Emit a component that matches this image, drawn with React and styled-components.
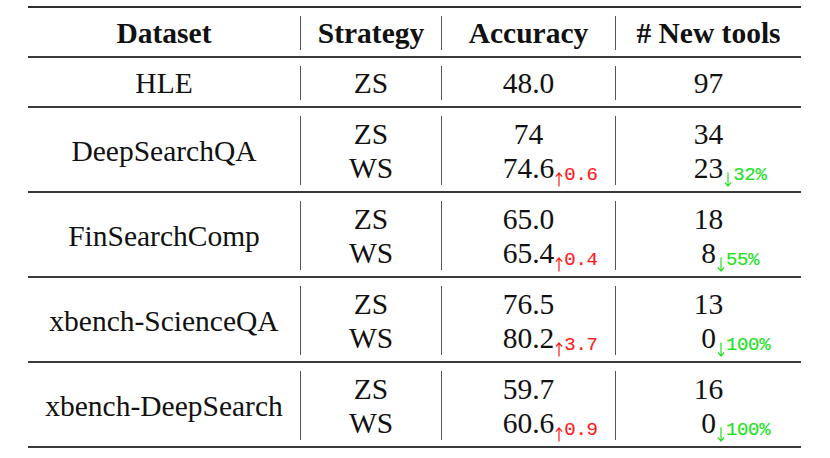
import React from "react";
import styled, { createGlobalStyle } from "styled-components";

const Global = createGlobalStyle`
  html, body {
    margin: 0;
    padding: 0;
    background: #fff;
  }
`;

const Page = styled.div`
  padding: 6px 0 0 28px;
  font-family: "Liberation Serif", "Times New Roman", serif;
  color: #111;
`;

const Table = styled.div`
  width: 773px;
  border-top: 2px solid #2e2e2e;
`;

const Row = styled.div`
  display: grid;
  grid-template-columns: 272px 141px 174px 186px;
  height: ${(p) => p.$h}px;
  border-bottom: 2px solid #3a3a3a;
`;

const Cell = styled.div`
  display: flex;
  flex-direction: column;
  justify-content: center;
  align-items: center;
  margin: 8px 0 6px;
  border-left: ${(p) => (p.$sep ? "1px solid #555" : "none")};
  font-size: 29.5px;
  line-height: 34px;
  font-weight: ${(p) => (p.$head ? 700 : 400)};
`;

const Value = styled.span`
  position: relative;
  display: block;
`;

const Delta = styled.span`
  position: absolute;
  left: 100%;
  top: 15px;
  display: flex;
  align-items: baseline;
  font-family: "Liberation Mono", "DejaVu Sans Mono", monospace;
  font-size: 19px;
  line-height: 19px;
  letter-spacing: -0.3px;
  -webkit-text-stroke: 0.15px currentColor;
  white-space: nowrap;
  color: ${(p) => (p.$up ? "#ff1a1a" : "#22e022")};
`;

const ArrowSvg = styled.svg`
  width: 8px;
  height: 15px;
  margin: 0 1px;
  align-self: flex-end;
  position: relative;
  top: 2px;
  flex-shrink: 0;
`;

const Arrow = ({ down }) => (
  <ArrowSvg viewBox="0 0 8 15" fill="none" stroke="currentColor" strokeWidth="1.2">
    {down ? (
      <path d="M4 0.5V14M0.8 10.4L4 14L7.2 10.4" />
    ) : (
      <path d="M4 14.5V1M0.8 4.6L4 1L7.2 4.6" />
    )}
  </ArrowSvg>
);

const rows = [
  { name: "HLE", lines: [{ s: "ZS", acc: "48.0", tools: "97" }] },
  {
    name: "DeepSearchQA",
    lines: [
      { s: "ZS", acc: "74", tools: "34" },
      { s: "WS", acc: "74.6", accD: "0.6", tools: "23", toolsD: "32%" },
    ],
  },
  {
    name: "FinSearchComp",
    lines: [
      { s: "ZS", acc: "65.0", tools: "18" },
      { s: "WS", acc: "65.4", accD: "0.4", tools: "8", toolsD: "55%" },
    ],
  },
  {
    name: "xbench-ScienceQA",
    lines: [
      { s: "ZS", acc: "76.5", tools: "13" },
      { s: "WS", acc: "80.2", accD: "3.7", tools: "0", toolsD: "100%" },
    ],
  },
  {
    name: "xbench-DeepSearch",
    lines: [
      { s: "ZS", acc: "59.7", tools: "16" },
      { s: "WS", acc: "60.6", accD: "0.9", tools: "0", toolsD: "100%" },
    ],
  },
];

const App = () => {
  return (
    <Page>
      <Global />
      <Table>
        <Row $h={48}>
          <Cell $head>Dataset</Cell>
          <Cell $head $sep>Strategy</Cell>
          <Cell $head $sep>Accuracy</Cell>
          <Cell $head $sep># New tools</Cell>
        </Row>
        {rows.map((r) => (
          <Row key={r.name} $h={r.lines.length > 1 ? 83 : 48}>
            <Cell>{r.name}</Cell>
            <Cell $sep>
              {r.lines.map((l) => (
                <Value key={l.s}>{l.s}</Value>
              ))}
            </Cell>
            <Cell $sep>
              {r.lines.map((l) => (
                <Value key={l.s}>
                  {l.acc}
                  {l.accD && (
                    <Delta $up>
                      <Arrow />
                      {l.accD}
                    </Delta>
                  )}
                </Value>
              ))}
            </Cell>
            <Cell $sep>
              {r.lines.map((l) => (
                <Value key={l.s}>
                  {l.tools}
                  {l.toolsD && (
                    <Delta>
                      <Arrow down />
                      {l.toolsD}
                    </Delta>
                  )}
                </Value>
              ))}
            </Cell>
          </Row>
        ))}
      </Table>
    </Page>
  );
};

export default App;
